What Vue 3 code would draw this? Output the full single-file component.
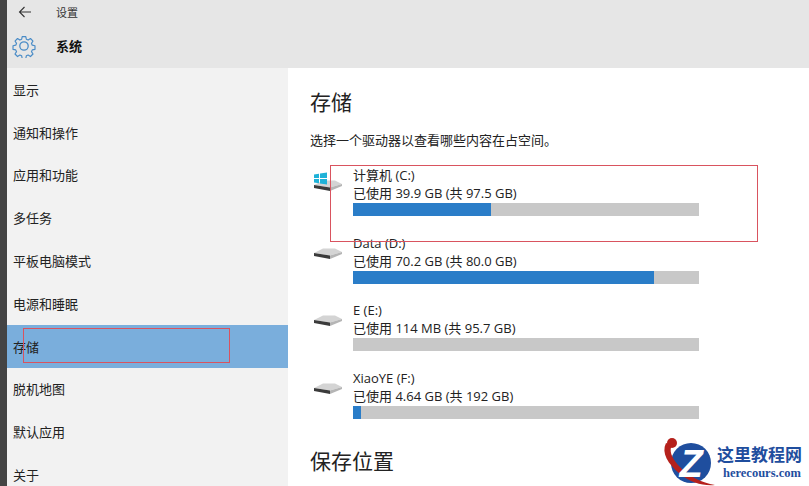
<template>
  <div class="page">
    <div class="strip"></div>
    <div class="window">
      <header class="header">
        <div class="top-row">
          <svg class="back" width="14" height="12" viewBox="0 0 14 12">
            <path d="M6.5 1 L1.5 6 L6.5 11 M1.5 6 H13" fill="none" stroke="#333" stroke-width="1.1" />
          </svg>
          <span class="top-title">设置</span>
        </div>
        <div class="title-row">
          <svg class="gear" width="24" height="24" viewBox="0 0 24 24">
            <path
              d="M10 1.5h4l.6 3 2 .9 2.6-1.7 2.8 2.8-1.7 2.6.9 2 3 .6v4l-3 .6-.9 2 1.700 2.600-2.800 2.800-2.600-1.700-2 .9-.6 3h-4l-.6-3-2-.9-2.600 1.700-2.800-2.800 1.700-2.600-.9-2-3-.6v-4l3-.6.9-2-1.700-2.600 2.800-2.800 2.600 1.700 2-.9z"
              fill="none" stroke="#4a8cc7" stroke-width="1.3" stroke-linejoin="round" transform="translate(1.2 1.2) scale(.9)" />
            <circle cx="12" cy="12" r="4.200" fill="none" stroke="#4a8cc7" stroke-width="1.3" />
          </svg>
          <span class="section-title">系统</span>
        </div>
      </header>
      <div class="body">
        <nav class="sidebar">
          <div v-for="item in menu" :key="item" class="menu-item" :class="{ active: item === '存储' }">
            {{ item }}
          </div>
        </nav>
        <main class="content">
          <h1 class="heading">存储</h1>
          <p class="hint">选择一个驱动器以查看哪些内容在占空间。</p>
          <div class="drives">
            <div v-for="d in drives" :key="d.name" class="drive">
              <div class="drive-icon">
                <svg width="30" height="30" viewBox="0 0 30 30">
                  <path d="M1 17 L10 12.500 H22 L29 16 L17 19.500 Z" fill="#d4d4d4" />
                  <path d="M1 17 L17 19.500 L17 23 L1 20 Z" fill="#3b3b3b" />
                  <path d="M17 19.500 L29 16 L29 18 L17 23 Z" fill="#b5b5b5" />
                  <template v-if="d.system">
                    <path d="M1 6.500 L6 5.700 V10 H1 Z M7 5.500 L14 4.500 V10 H7 Z M1 11 H6 V15.300 L1 14.500 Z M7 11 H14 V16.500 L7 15.500 Z" fill="#1fb2d8" />
                  </template>
                </svg>
              </div>
              <div class="drive-info">
                <div class="drive-name">{{ d.name }}</div>
                <div class="drive-usage">{{ d.usage }}</div>
                <div class="bar">
                  <div class="bar-fill" :style="{ width: d.percent + '%' }"></div>
                </div>
              </div>
            </div>
          </div>
          <h1 class="heading save">保存位置</h1>
        </main>
      </div>
    </div>

    <!-- 截图上的标注框 -->
    <div class="mark mark-drive"></div>
    <div class="mark mark-menu"></div>

    <div class="logo">
      <svg width="58" height="52" viewBox="0 0 58 52">
        <ellipse cx="31" cy="27" rx="20" ry="20" fill="#1f4e9e" />
        <path d="M6 7 C1 17 8 28 20 38 C31 47 43 50 55 49 C42 47 28 40 18 29 C11 21 9 14 12 9 Z" fill="#b5211c" />
        <circle cx="12" cy="7" r="5" fill="#b5211c" />
        <text x="31" y="41" text-anchor="middle" class="logo-z">Z</text>
      </svg>
      <div class="logo-text">
        <div class="logo-cn">这里教程网</div>
        <div class="logo-en">herecours.com</div>
      </div>
    </div>
  </div>
</template>

<script setup>
const menu = ['显示', '通知和操作', '应用和功能', '多任务', '平板电脑模式', '电源和睡眠', '存储', '脱机地图', '默认应用', '关于']

const drives = [
  { name: '计算机 (C:)', usage: '已使用 39.9 GB (共 97.5 GB)', percent: 40, system: true },
  { name: 'Data (D:)', usage: '已使用 70.2 GB (共 80.0 GB)', percent: 87 },
  { name: 'E (E:)', usage: '已使用 114 MB (共 95.7 GB)', percent: 0 },
  { name: 'XiaoYE (F:)', usage: '已使用 4.64 GB (共 192 GB)', percent: 2.300 }
]
</script>

<style>
html,
body {
  margin: 0;
  background: #fff;
}
</style>

<style scoped>
.page {
  position: relative;
  display: flex;
  width: 809px;
  height: 486px;
  overflow: hidden;
  font-family: "Open Sans", "Noto Sans CJK SC", sans-serif;
  color: #222;
  background: #fff;
}

.strip {
  width: 7px;
  flex: none;
  background: #444;
}

.window {
  flex: 1;
  display: flex;
  flex-direction: column;
  min-width: 0;
}

.header {
  height: 68px;
  flex: none;
  background: #e6e6e6;
}

.top-row {
  display: flex;
  align-items: center;
  height: 23px;
  padding-left: 11px;
}

.back {
  margin-right: 24px;
}

.top-title {
  font-size: 11px;
  color: #333;
}

.title-row {
  display: flex;
  align-items: center;
  height: 45px;
  padding-left: 5px;
}

.gear {
  margin-right: 20px;
}

.section-title {
  font-size: 13px;
  font-weight: 700;
  color: #111;
}

.body {
  flex: 1;
  display: flex;
  min-height: 0;
}

.sidebar {
  width: 281px;
  flex: none;
  padding-top: 0;
  background: #f2f2f2;
}

.menu-item {
  display: flex;
  align-items: center;
  height: 42.800px;
  padding-left: 6px;
  font-size: 13px;
  color: #222;
}

.menu-item.active {
  background: #7aaedc;
}

.content {
  flex: 1;
  padding: 19px 0 0 22px;
  min-width: 0;
}

.heading {
  margin: 0;
  font-size: 21px;
  line-height: 30px;
  font-weight: 400;
  color: #222;
}

.hint {
  margin: 13px 0 0;
  font-size: 13px;
  line-height: 20px;
}

.drives {
  margin-top: 16px;
}

.drive {
  display: flex;
  height: 67.500px;
  margin-left: 3px;
}

.drive-icon {
  width: 40px;
  flex: none;
  padding-top: 2px;
}

.drive-info {
  width: 346px;
}

.drive-name,
.drive-usage {
  font-size: 13px;
  line-height: 18px;
  white-space: nowrap;
}

.bar {
  height: 13px;
  margin-top: 1px;
  background: #c8c8c8;
}

.bar-fill {
  height: 100%;
  background: #2a7dc8;
}

.save {
  margin-top: 10px;
}

.mark {
  position: absolute;
  box-sizing: border-box;
  border: 1px solid #d9535f;
}

.mark-drive {
  left: 330px;
  top: 165px;
  width: 428px;
  height: 77px;
}

.mark-menu {
  left: 23px;
  top: 328px;
  width: 207px;
  height: 35px;
}

.logo {
  position: absolute;
  left: 660px;
  top: 436px;
  display: flex;
  width: 149px;
  height: 50px;
  background: #fff;
}

.logo-z {
  font-family: "Liberation Sans", sans-serif;
  font-size: 38px;
  font-weight: 700;
  font-style: italic;
  fill: #fff;
}

.logo-text {
  margin-left: -1px;
  padding-top: 7px;
}

.logo-cn {
  font-family: "Noto Sans CJK SC", sans-serif;
  font-size: 17px;
  font-weight: 700;
  line-height: 22px;
  color: #1f4e9e;
  white-space: nowrap;
}

.logo-en {
  margin: 1px 0 0 6px;
  font-family: "Liberation Serif", serif;
  font-size: 12.500px;
  font-weight: 700;
  color: #1f4e9e;
  white-space: nowrap;
}
</style>
